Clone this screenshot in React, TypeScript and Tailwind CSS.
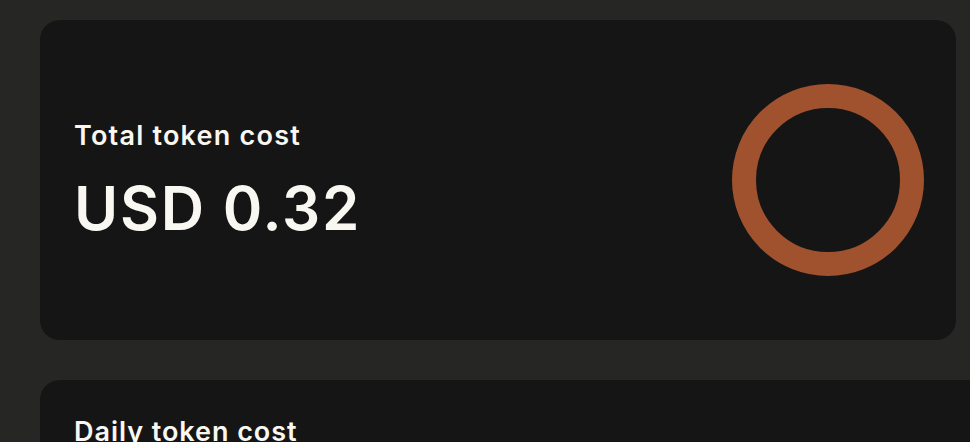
import React from 'react';

function Ring() {
  return (
    <svg width="192" height="192" viewBox="0 0 192 192" className="shrink-0">
      <circle cx="96" cy="96" r="84" fill="none" stroke="#a0512e" strokeWidth="24" />
    </svg>
  );
}

export default function App() {
  return (
    <div
      className="h-[442px] w-[970px] overflow-hidden bg-[#262624] pl-10 pt-5 text-[#f8f7f2]"
      style={{ fontFamily: 'Inter, "Noto Sans", sans-serif' }}
    >
      <div className="flex h-[320px] w-[916px] items-center justify-between rounded-[20px] bg-[#151515] pl-[34px] pr-8">
        <div className="flex flex-col">
          <h2 className="text-[27px] font-semibold leading-none tracking-[0.045em]">Total token cost</h2>
          <p className="mt-[29px] text-[60px] font-semibold leading-none tracking-[0.03em]">USD 0.32</p>
        </div>
        <Ring />
      </div>
      <div className="mt-10 h-[200px] w-[960px] rounded-[20px] bg-[#151515] pl-[34px] pt-[38px]">
        <h2 className="text-[27px] font-semibold leading-none tracking-[0.035em]">Daily token cost</h2>
      </div>
    </div>
  );
}
